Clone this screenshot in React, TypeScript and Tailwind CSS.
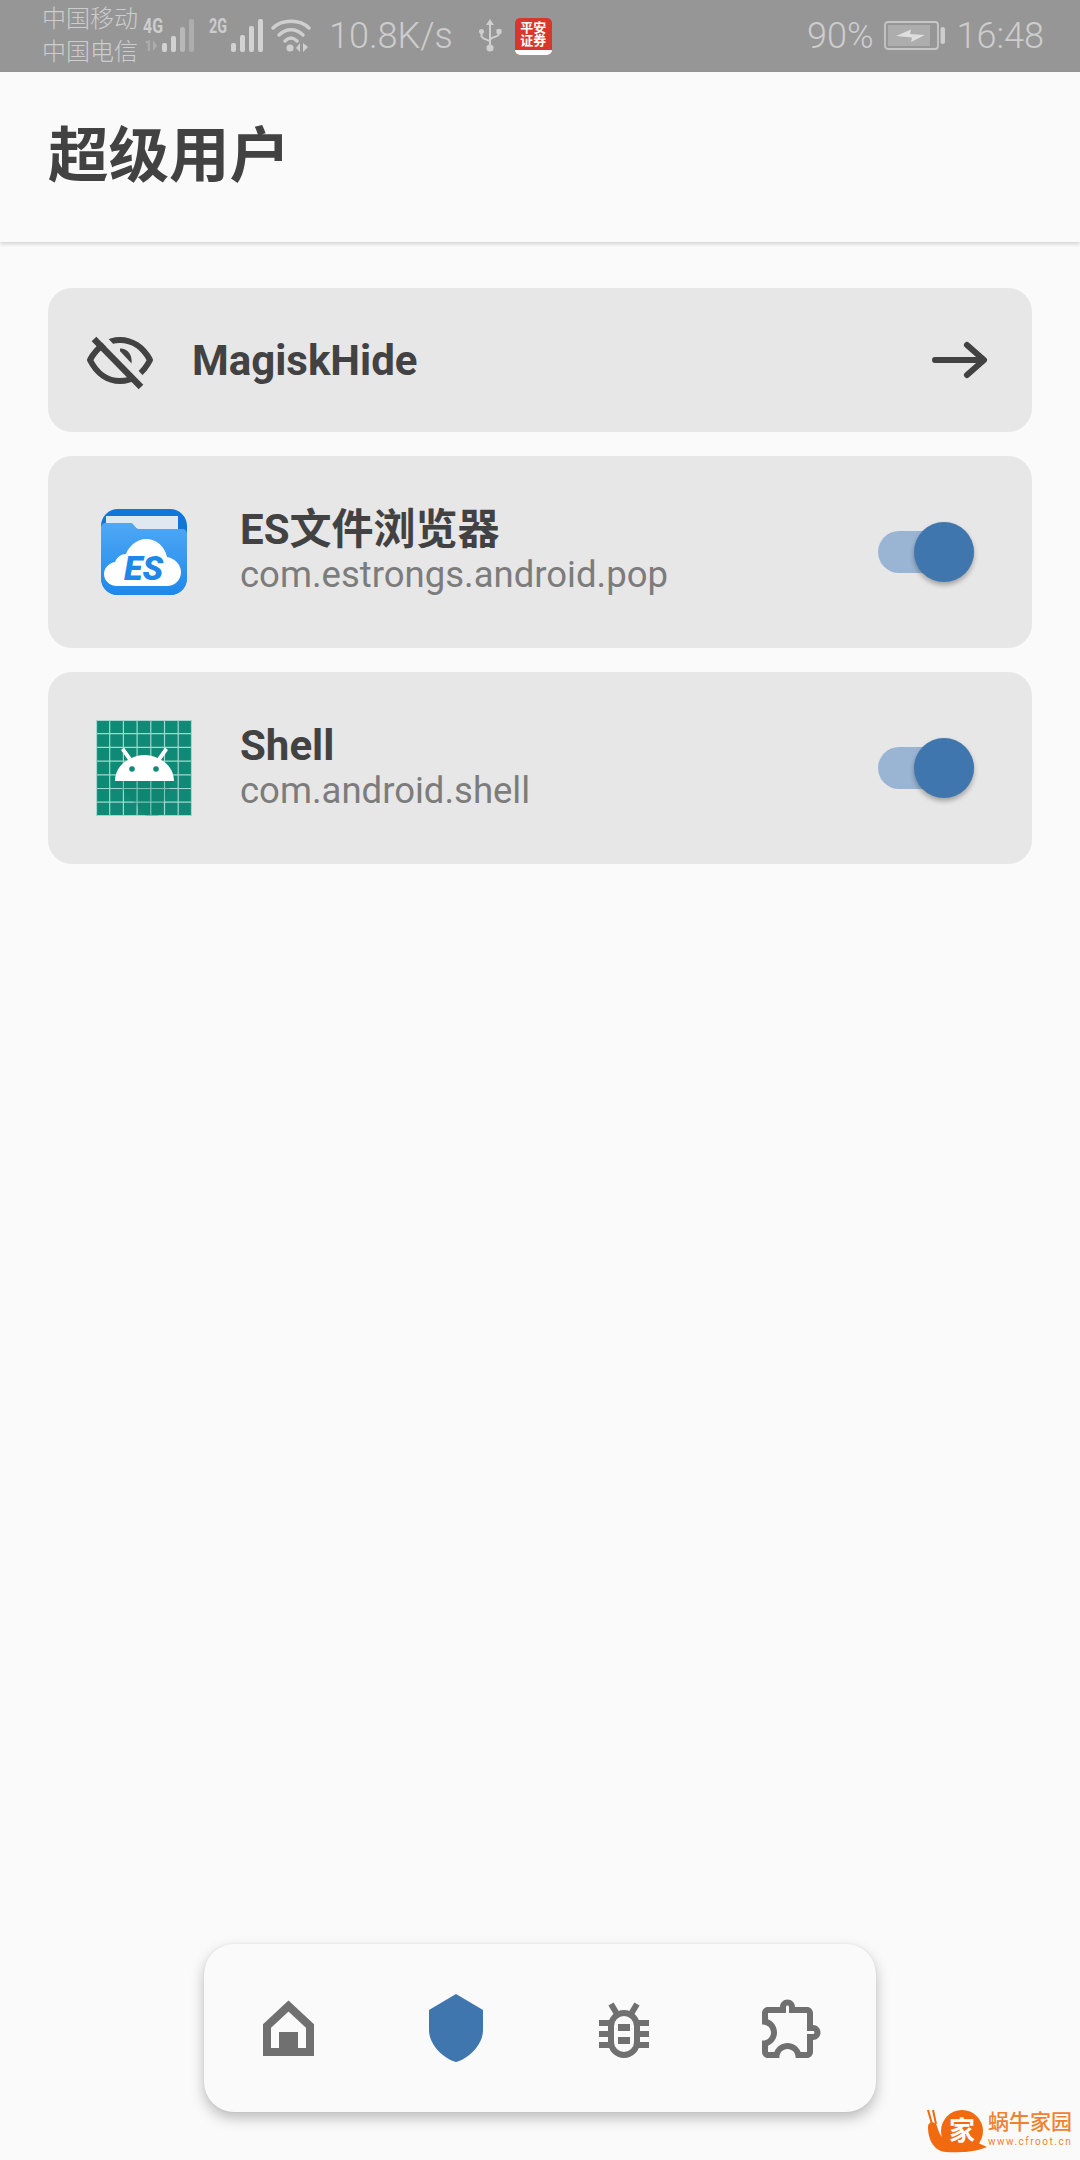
import { ReactNode } from 'react'

const CJK = "font-['Roboto','Noto_Sans_CJK_SC',sans-serif]"

function SimOne() {
  return (
    <svg className="ml-[5px]" width="56" height="44" viewBox="0 -2 56 44">
      <text x="0" y="17" fontSize="20" fontWeight="700" fill="#cdcdcd" fontFamily="Roboto" textLength="20" lengthAdjust="spacingAndGlyphs">4G</text>
      <text x="1" y="35" fontSize="15" fontWeight="700" fill="#adadad" fontFamily="Roboto">1</text>
      <path d="M10 24v11l4-5z" fill="#adadad" />
      <rect x="19" y="27" width="5" height="9" rx="2" fill="#d2d2d2" />
      <rect x="28" y="20" width="5" height="16" rx="2" fill="#d2d2d2" />
      <rect x="37" y="11" width="5" height="25" rx="2" fill="#b8b8b8" />
      <rect x="46" y="3" width="5" height="33" rx="2" fill="#adadad" />
    </svg>
  )
}

function SimTwo() {
  return (
    <svg className="ml-[8px]" width="56" height="44" viewBox="0 -2 56 44">
      <text x="2" y="17" fontSize="20" fontWeight="700" fill="#cdcdcd" fontFamily="Roboto" textLength="18" lengthAdjust="spacingAndGlyphs">2G</text>
      <rect x="24" y="27" width="5" height="9" rx="2" fill="#d2d2d2" />
      <rect x="33" y="19" width="5" height="17" rx="2" fill="#d2d2d2" />
      <rect x="42" y="10" width="5" height="26" rx="2" fill="#d2d2d2" />
      <rect x="51" y="3" width="5" height="33" rx="2" fill="#d2d2d2" />
    </svg>
  )
}

function StatusBar() {
  return (
    <div className={`${CJK} flex h-[72px] items-center bg-[#969696] pl-[42px] pr-[36px] text-[#cdcdcd]`}>
      <div className="flex w-[96px] flex-col text-[24px] leading-[33px] font-light">
        <span className="whitespace-nowrap">中国移动</span>
        <span className="whitespace-nowrap">中国电信</span>
      </div>
      <SimOne />
      <SimTwo />
      <svg className="ml-[8px]" width="40" height="36" viewBox="0 0 40 36">
        <g fill="none" stroke="#cfcfcf" strokeWidth="3.400" strokeLinecap="round">
          <path d="M2 10C11 1 29 1 38 10" />
          <path d="M8 17C15 10 25 10 32 17" />
          <path d="M14 23C18 19 22 19 26 23" />
        </g>
        <circle cx="19" cy="30" r="3.600" fill="#cfcfcf" />
        <path d="M29 25v9l-4-4zM32 25v9l5-5z" fill="#cfcfcf" />
      </svg>
      <span className="ml-[18px] text-[36px] leading-none font-light">10.8K/s</span>
      <svg className="ml-[25px]" width="24" height="36" viewBox="0 0 24 36">
        <g fill="#cfcfcf">
          <path d="M12 1l4 6h-3v20h-2V7H8z" />
          <circle cx="12" cy="30" r="3.600" />
          <rect x="1" y="11" width="5" height="5" rx="2.500" />
          <rect x="18.500" y="11" width="5" height="5" rx="1" />
        </g>
        <path d="M3.500 15v3c0 3 8.500 4 8.500 6M21 15v1c0 3-9 3-9 6" stroke="#cfcfcf" strokeWidth="2" fill="none" />
      </svg>
      <div className="ml-[13px] flex h-[37px] w-[37px] flex-col items-center overflow-hidden rounded-[5px] bg-[#d8382c]">
        <span className="mt-[3px] text-center text-[13px] leading-[13px] font-bold text-white whitespace-nowrap">平安</span>
        <span className="text-center text-[13px] leading-[13px] font-bold text-white whitespace-nowrap">证券</span>
        <div className="mt-auto h-[5px] w-full bg-white" />
      </div>
      <span className="ml-auto text-[36px] leading-none font-light">90%</span>
      <svg className="ml-[10px]" width="62" height="30" viewBox="0 0 62 30">
        <rect x="1" y="1" width="53" height="27" rx="3" fill="none" stroke="#c6c6c6" strokeWidth="1.800" />
        <rect x="4" y="4" width="42" height="21" fill="#adadad" />
        <rect x="56.500" y="6" width="4.500" height="17" rx="2" fill="#cdcdcd" />
        <path d="M12 15L27 8.500L26 13L41 14L27 21L28 16.500Z" fill="#dedede" />
      </svg>
      <span className="ml-[11px] text-[36px] leading-none font-light">16:48</span>
    </div>
  )
}

function EyeOff() {
  return (
    <svg width="72" height="72" viewBox="0 0 72 72" fill="none" stroke="#424242" strokeWidth="6">
      <path d="M6 36C13 23 24 16 36 16C48 16 59 23 66 36C59 50 48 57 36 57C24 57 13 50 6 36Z" strokeLinejoin="round" />
      <path d="M36 28C42 28 45 33 44 40" strokeWidth="7" />
      <path d="M15 10L62 60" stroke="#e7e7e7" strokeWidth="7" />
      <path d="M10 15L57 63" strokeWidth="6.500" />
    </svg>
  )
}

function EsIcon() {
  return (
    <svg width="88" height="88" viewBox="0 0 88 88">
      <defs>
        <linearGradient id="folder" x1="0" y1="0" x2="0" y2="1">
          <stop offset="0" stopColor="#4fa8f5" />
          <stop offset="1" stopColor="#1e88ea" />
        </linearGradient>
      </defs>
      <rect x="1" y="1" width="86" height="86" rx="17" fill="#1176d8" />
      <path d="M6 8h72v15H6z" fill="#dfe8f0" />
      <path d="M1 20c0-3 2-5 5-5h25c3 0 4 6 8 6h43c3 0 5 2 5 5v44c0 10-7 17-17 17H18C8 87 1 80 1 70z" fill="url(#folder)" />
      <path d="M17 78c-8 0-13-6-13-12 0-6 5-11 11-12 2-5 6-8 11-8 3-8 11-15 20-15 11 0 19 8 21 18 7 1 14 7 14 15 0 8-6 14-14 14z" fill="#fff" />
      <text x="24" y="72" fontFamily="Roboto" fontWeight="900" fontStyle="italic" fontSize="34" fill="#1e88ea">ES</text>
    </svg>
  )
}

function AndroidIcon() {
  const lines = [13.7, 27.4, 41.1, 54.8, 68.5, 82.2]
  return (
    <svg width="96" height="96" viewBox="0 0 96 96">
      <rect width="96" height="96" fill="#0e8a76" />
      <g stroke="#a3d8ce" strokeWidth="1.200">
        {[0.5, ...lines, 95.5].map((p) => (
          <g key={p}>
            <path d={`M${p} 0V96`} />
            <path d={`M0 ${p}H96`} />
          </g>
        ))}
      </g>
      <path d="M19 61H77L62 96H50z" fill="#0a7a68" opacity="0.25" />
      <path d="M19 61c0-9 5-17 13-21l-7-10 3-2.500 7.500 10.500c4-2 8.500-3 13-3s9 1 13 3l7.500-10.500 3 2.500-7 10c8 4 13 12 13 21z" fill="#fff" />
      <circle cx="36" cy="49" r="2.800" fill="#0e8a76" />
      <circle cx="60" cy="49" r="2.800" fill="#0e8a76" />
    </svg>
  )
}

function Toggle() {
  return (
    <div className="relative h-[42px] w-[96px]">
      <div className="h-[42px] w-[96px] rounded-full bg-[#9ab5d3]" />
      <div className="absolute right-0 top-[-9px] h-[60px] w-[60px] rounded-full bg-[#3f76ad] shadow-[0_3px_5px_rgba(0,0,0,0.3)]" />
    </div>
  )
}

function AppRow({ icon, name, pkg }: { icon: ReactNode; name: string; pkg: string }) {
  return (
    <div className="flex h-[192px] items-center rounded-[24px] bg-[#e7e7e7] pr-[58px]">
      <div className="ml-[48px] flex w-[96px] items-center justify-center">{icon}</div>
      <div className="ml-[48px] flex flex-col">
        <span className="text-[42px] leading-[44px] font-bold text-[#424242]">{name}</span>
        <span className="mt-[1px] text-[36.500px] leading-[44px] text-[#7c7c7c]">{pkg}</span>
      </div>
      <div className="ml-auto">
        <Toggle />
      </div>
    </div>
  )
}

function NavBar() {
  return (
    <div className="mx-auto mb-[48px] mt-auto flex h-[168px] w-[672px] items-center rounded-[30px] bg-[#fafafa] shadow-[0_6px_14px_rgba(0,0,0,0.25),0_0_2px_rgba(0,0,0,0.08)]">
      <div className="flex flex-1 justify-center">
        <svg width="72" height="72" viewBox="0 0 72 72">
          <path d="M36.500 14L15 34V60H58V34Z" fill="none" stroke="#707070" strokeWidth="8" />
          <rect x="27" y="40" width="19" height="20" fill="#707070" />
        </svg>
      </div>
      <div className="flex flex-1 justify-center">
        <svg width="72" height="72" viewBox="0 0 72 72">
          <path d="M36 2L63 18V38C63 52 50 66 36 70C22 66 9 52 9 38V18Z" fill="#3f76ad" />
        </svg>
      </div>
      <div className="flex flex-1 justify-center">
        <svg width="72" height="72" viewBox="0 0 72 72">
          <g fill="none" stroke="#707070" strokeWidth="6">
            <rect x="23" y="21" width="26" height="42" rx="13" />
            <path d="M23 12L29 22M49 12L43 22" />
            <path d="M11 31H22M50 31H61M11 42H22M50 42H61M11 53H22M50 53H61" />
          </g>
          <rect x="30" y="32" width="12" height="7" fill="#707070" />
          <rect x="30" y="45" width="12" height="7" fill="#707070" />
        </svg>
      </div>
      <div className="flex flex-1 justify-center">
        <svg width="72" height="72" viewBox="0 0 24 24" fill="#707070">
          <path d="M10.500 4.500c.28 0 .5.22.5.5v2h6v6h2c.28 0 .5.22.5.5s-.22.5-.5.5h-2v6h-2.120c-.68-1.750-2.390-3-4.380-3s-3.700 1.250-4.380 3H4v-2.120c1.750-.68 3-2.390 3-4.380 0-1.990-1.240-3.700-2.990-4.380L4 7h6V5c0-.28.22-.5.5-.5m0-2C9.120 2.500 8 3.620 8 5H4c-1.100 0-1.990.9-1.990 2v3.800h.29c1.490 0 2.700 1.210 2.700 2.700s-1.210 2.700-2.700 2.700H2V20c0 1.100.9 2 2 2h3.800v-.3c0-1.490 1.210-2.700 2.700-2.700s2.700 1.210 2.700 2.700v.3H17c1.100 0 2-.9 2-2v-4c1.380 0 2.500-1.120 2.500-2.500S20.380 11 19 11V7c0-1.100-.9-2-2-2h-4c0-1.380-1.120-2.500-2.500-2.500z" />
        </svg>
      </div>
    </div>
  )
}

function Watermark() {
  return (
    <div className="absolute bottom-0 right-0 flex h-[70px] w-[180px] items-center">
      <svg className="ml-[26px] shrink-0" width="62" height="70" viewBox="0 0 62 70">
        <path d="M2 20L6 34M7 20L10 34" stroke="#f26a0f" strokeWidth="2" fill="none" />
        <path d="M2 37C2 31 9 31 11 36C13 44 16 48 20 50L50 52L61 57C50 62 30 63 20 62C8 61 2 50 2 37Z" fill="#f26a0f" />
        <circle cx="36" cy="41" r="21" fill="#f26a0f" />
        <text x="36" y="50" textAnchor="middle" fontSize="26" fontWeight="700" fill="#fff" fontFamily="'Noto Sans CJK SC'">家</text>
      </svg>
      <div className={`${CJK} mt-[6px] flex flex-col text-[#f0822f]`}>
        <span className="text-[21px] leading-[26px] font-medium whitespace-nowrap">蜗牛家园</span>
        <span className="text-[10px] leading-[13px] tracking-[1.500px] whitespace-nowrap">www.cfroot.cn</span>
      </div>
    </div>
  )
}

export default function App() {
  return (
    <div className={`${CJK} relative flex h-[2160px] w-[1080px] flex-col overflow-hidden bg-[#fafafa]`}>
      <StatusBar />

      {/* Title bar */}
      <div className="flex h-[170px] items-center pl-[48px] shadow-[0_2px_4px_rgba(0,0,0,0.16)]">
        <h1 className="text-[60.500px] leading-none font-bold text-[#424242]">超级用户</h1>
      </div>

      <div className="flex flex-col gap-[24px] px-[48px] pt-[46px]">
        <div className="flex h-[144px] items-center rounded-[24px] bg-[#e7e7e7] pl-[36px] pr-[43px]">
          <EyeOff />
          <span className="ml-[36px] text-[42px] font-bold text-[#424242]">MagiskHide</span>
          <svg className="ml-auto" width="60" height="48" viewBox="0 0 60 48" fill="none" stroke="#424242" strokeWidth="6" strokeLinecap="round" strokeLinejoin="round">
            <path d="M6 24H54M38 9L55 24L38 39" />
          </svg>
        </div>
        <AppRow icon={<EsIcon />} name="ES文件浏览器" pkg="com.estrongs.android.pop" />
        <AppRow icon={<AndroidIcon />} name="Shell" pkg="com.android.shell" />
      </div>

      <NavBar />
      <Watermark />
    </div>
  )
}
